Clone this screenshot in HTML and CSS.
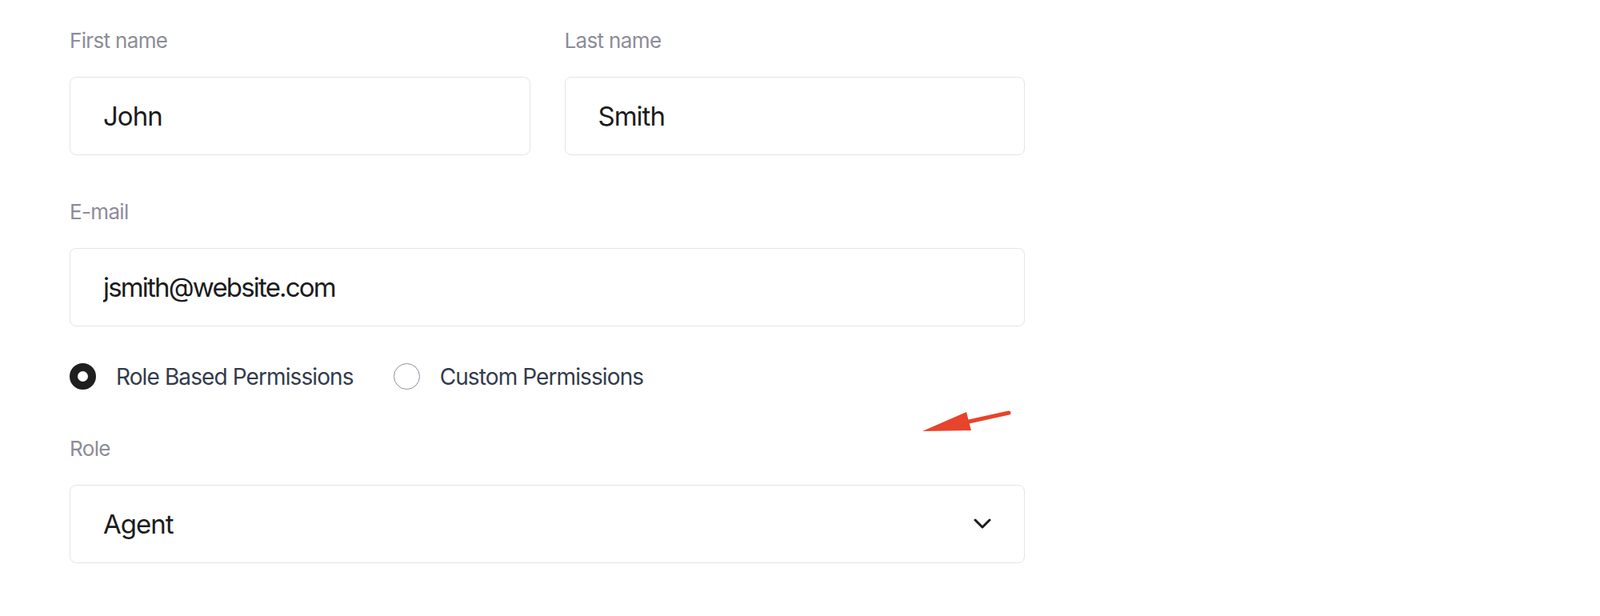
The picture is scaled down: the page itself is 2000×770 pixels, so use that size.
FILE: index.html
```html
<!DOCTYPE html>
<html lang="en">
<head>
    <meta charset="UTF-8">
    <title>Edit user</title>
    <link rel="stylesheet" href="styles.css">
</head>
<body>
    <form class="user-form">
        <div class="row">
            <div class="field">
                <label for="first-name">First name</label>
                <input class="text-input" type="text" id="first-name" value="John">
            </div>
            <div class="field">
                <label for="last-name">Last name</label>
                <input class="text-input" type="text" id="last-name" value="Smith">
            </div>
        </div>

        <div class="field field-email">
            <label for="email">E-mail</label>
            <input class="text-input input-email" type="email" id="email" value="jsmith@website.com">
        </div>

        <!-- permissions type -->
        <div class="radio-row">
            <label class="radio-option">
                <input type="radio" name="perm" checked>
                <span>Role Based Permissions</span>
            </label>
            <label class="radio-option">
                <input type="radio" name="perm">
                <span>Custom Permissions</span>
            </label>
        </div>

        <div class="field field-role">
            <label>Role</label>
            <div class="select">
                <span>Agent</span>
                <svg class="chevron" width="22" height="14" viewBox="0 0 22 14">
                    <path d="M2 2 L11 11 L20 2" fill="none" stroke="#1c1c1c" stroke-width="3" stroke-linecap="round" stroke-linejoin="round"/>
                </svg>
            </div>
        </div>

        <svg class="annotation" width="140" height="50" viewBox="0 0 140 50">
            <line x1="71" y1="27" x2="121" y2="16" stroke="#e6442b" stroke-width="5" stroke-linecap="round"/>
            <polygon points="13,39 68,15 74,38" fill="#e6442b"/>
        </svg>
    </form>
</body>
</html>
```

FILE: styles.css
```css
body {
  margin: 0;
  background: #ffffff;
  font-family: Inter, "Noto Sans", sans-serif;
}

.user-form {
  position: relative;
  width: 1194px;
  margin-left: 87px;
  padding-top: 35px;
}

.row {
  display: grid;
  grid-template-columns: 1fr 1fr;
  gap: 43px;
}

.field label {
  display: block;
  font-size: 26px;
  line-height: 32px;
  letter-spacing: -0.025em;
  color: #8d8c99;
  margin-bottom: 29px;
}

.text-input,
.select {
  display: flex;
  align-items: center;
  width: 100%;
  height: 98px;
  box-sizing: border-box;
  margin: 0;
  padding: 0 41px;
  border: 1.5px solid #e5e5e8;
  border-radius: 8px;
  background: #fff;
  font-family: Inter, "Noto Sans", sans-serif;
  font-size: 33px;
  letter-spacing: -0.03em;
  color: #1c1c1c;
  outline: none;
}

.input-email {
  letter-spacing: -0.055em;
}

.field-email {
  margin-top: 55px;
}

.radio-row {
  display: flex;
  align-items: center;
  gap: 50px;
  margin-top: 46px;
  height: 33px;
}

.radio-option {
  display: flex;
  align-items: center;
  gap: 25px;
  font-size: 28px;
  letter-spacing: -0.032em;
  color: #333b4c;
}

.radio-option input {
  appearance: none;
  margin: 0;
  width: 33px;
  height: 33px;
  box-sizing: border-box;
  border-radius: 50%;
  border: 1.5px solid #8b909b;
  background: #fff;
}

.radio-option input:checked {
  border: 10px solid #1f1f1f;
}

.field-role {
  margin-top: 58px;
}

.select {
  justify-content: space-between;
}

.chevron {
  margin-right: 0;
}

.annotation {
  position: absolute;
  left: 1053px;
  top: 500px;
}
```
